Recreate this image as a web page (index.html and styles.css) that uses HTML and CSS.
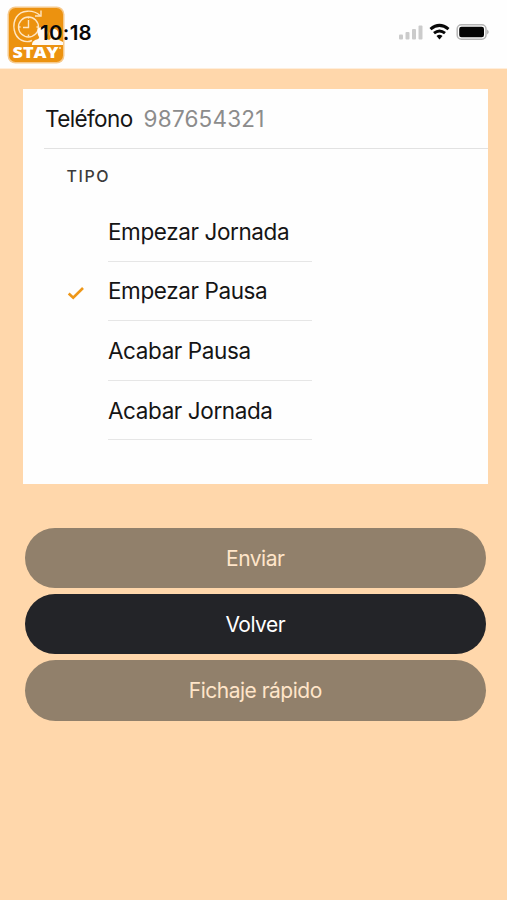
FILE: index.html
```html
<!DOCTYPE html>
<html lang="es">
<head>
<meta charset="utf-8">
<meta name="viewport" content="width=device-width, initial-scale=1">
<title>Fichaje</title>
<link rel="stylesheet" href="styles.css">
</head>
<body>
<header class="header">
  <svg class="logo" viewBox="0 0 58 58" role="img">
    <rect class="logo-edge" x="0.5" y="0.5" width="57" height="57" rx="8"/>
    <rect class="logo-fill" x="2" y="2" width="54" height="54" rx="6.5"/>
    <g class="logo-line">
      <path d="M33 9.500C26 3 14 4 9.500 11C4.500 19 7 30 14 34C18 36 22 36 25 34.500"/>
      <path d="M34 4.500v5.500h-6"/>
      <circle cx="21.500" cy="21" r="10"/>
      <path d="M21.500 14v7.500h-5.500M21.500 11v1.500M21.500 28.500v2M11.500 21h2M29.500 21h2"/>
    </g>
    <path class="logo-white" d="M25 39c0-4 3-5 6-6 2-1 1-2 0-4-1-4-1-8 4-8s6 4 5 8c-1 2-2 3 0 4l2 1c2-1 2-2 1-4-1-3 0-7 4-7s5 4 4 7c-1 2-1 3 1 4l4 2v3z"/>
    <text class="logo-text" x="5.500" y="52" textLength="46" lengthAdjust="spacingAndGlyphs">STAY</text>
    <circle class="logo-dot" cx="53" cy="42" r="1"/>
  </svg>
  <span class="time">10:18</span>
  <svg class="status" viewBox="0 0 92 20">
    <g class="signal">
      <rect x="1" y="12.500" width="4" height="5" rx="1"/>
      <rect x="7.500" y="10" width="4" height="7.500" rx="1"/>
      <rect x="14" y="7" width="4" height="10.500" rx="1"/>
      <rect x="20.500" y="3.500" width="4" height="14" rx="1"/>
    </g>
    <g class="wifi">
      <path d="M32.500 7.200Q41.500-.4 50.500 7.200"/>
      <path d="M36 11.200Q41.500 6.800 47 11.200"/>
      <path class="wifi-dot" d="M38.500 14Q41.500 11.600 44.500 14L41.500 17.500z"/>
    </g>
    <rect class="battery-edge" x="59.200" y="2.700" width="28.800" height="14.600" rx="4.200"/>
    <rect class="battery-fill" x="61.200" y="4.700" width="24.800" height="10.600" rx="2.300"/>
    <path class="battery-cap" d="M89.300 7.500q2.600 2.500 0 5z"/>
  </svg>
</header>
<main class="content">
  <section class="card">
    <div class="phone"><span class="phone-label">Teléfono</span><span class="phone-value">987654321</span></div>
    <h2 class="title">TIPO</h2>
    <ul class="options">
      <li class="option"><span class="mark"></span><span class="option-text">Empezar Jornada</span></li>
      <li class="option"><span class="mark"><svg class="check" viewBox="0 0 18 14"><path d="M1.700 7.500l4.500 4.200L16 2"/></svg></span><span class="option-text">Empezar Pausa</span></li>
      <li class="option"><span class="mark"></span><span class="option-text">Acabar Pausa</span></li>
      <li class="option"><span class="mark"></span><span class="option-text">Acabar Jornada</span></li>
    </ul>
  </section>
  <div class="actions">
    <button class="button muted">Enviar</button>
    <button class="button">Volver</button>
    <button class="button muted">Fichaje rápido</button>
  </div>
</main>
</body>
</html>
```
FILE: styles.css
```css
* { box-sizing: border-box; }
body {
  margin: 0;
  min-height: 900px;
  background: #ffd7ab;
  color: #151515;
  font-family: Inter, "Liberation Sans", sans-serif;
}
.header {
  position: relative;
  display: flex;
  justify-content: space-between;
  height: 69px;
  padding: 6px 17px 0 7px;
  background: #fefefe;
  border-bottom: 1px solid #ffeedb;
}
.logo { width: 58px; height: 58px; }
.logo-edge { fill: #f6c98c; }
.logo-fill { fill: #ec920f; }
.logo-line { fill: none; stroke: #ffe6c2; stroke-width: 1.4; }
.logo-white { fill: #fffaf2; }
.logo-text { fill: #fff; font: 800 16.5px "Open Sans", sans-serif; }
.logo-dot { fill: #ffe6c2; }
.time {
  position: absolute;
  left: 40px;
  top: 20px;
  color: #080808;
  font-size: 20.5px;
  font-weight: 600;
  line-height: 25px;
  letter-spacing: 0.3px;
}
.status { width: 92px; height: 20px; margin-top: 16px; }
.signal { fill: #cbcbcb; }
.wifi { fill: none; stroke: #080808; stroke-width: 3; }
.wifi-dot { fill: #080808; stroke: none; }
.battery-edge { fill: none; stroke: #b5b5b5; stroke-width: 1.5; }
.battery-fill { fill: #050505; }
.battery-cap { fill: #999; }
.content { padding: 20px 19px 0 22.5px; }
.card { height: 395px; background: #fefefe; }
.phone {
  display: flex;
  align-items: center;
  gap: 11px;
  height: 60px;
  margin-left: 21.5px;
  padding-left: 1px;
  border-bottom: 1px solid #e2e2e2;
  font-size: 22.5px;
}
.phone-label { letter-spacing: -0.6px; }
.phone-value { color: #8c8c8c; letter-spacing: 0.2px; }
.title {
  margin: 17px 0 0 44px;
  color: #3b3b3b;
  font-size: 16px;
  font-weight: 500;
  line-height: 20px;
  letter-spacing: 1.6px;
}
.options { margin: 16px 0 0; padding: 0; list-style: none; }
.option { display: flex; height: 59.6px; }
.mark { display: flex; align-items: center; width: 85.5px; padding: 3px 0 0 44.5px; }
.check { width: 18px; height: 14px; fill: none; stroke: #ee9718; stroke-width: 2.6; }
.option-text {
  display: flex;
  align-items: center;
  width: 204px;
  border-bottom: 1px solid #e6e6e6;
  font-size: 22.5px;
  letter-spacing: -0.4px;
}
.actions {
  display: flex;
  flex-direction: column;
  gap: 6px;
  margin: 44px 2.5px 0;
}
.button {
  height: 60.2px;
  padding: 0;
  border: 0;
  border-radius: 31px;
  background: #232428;
  color: #fff;
  font-family: inherit;
  font-size: 21px;
  letter-spacing: -0.5px;
}
.muted { background: #91806b; color: #ffe5c9; }
```
